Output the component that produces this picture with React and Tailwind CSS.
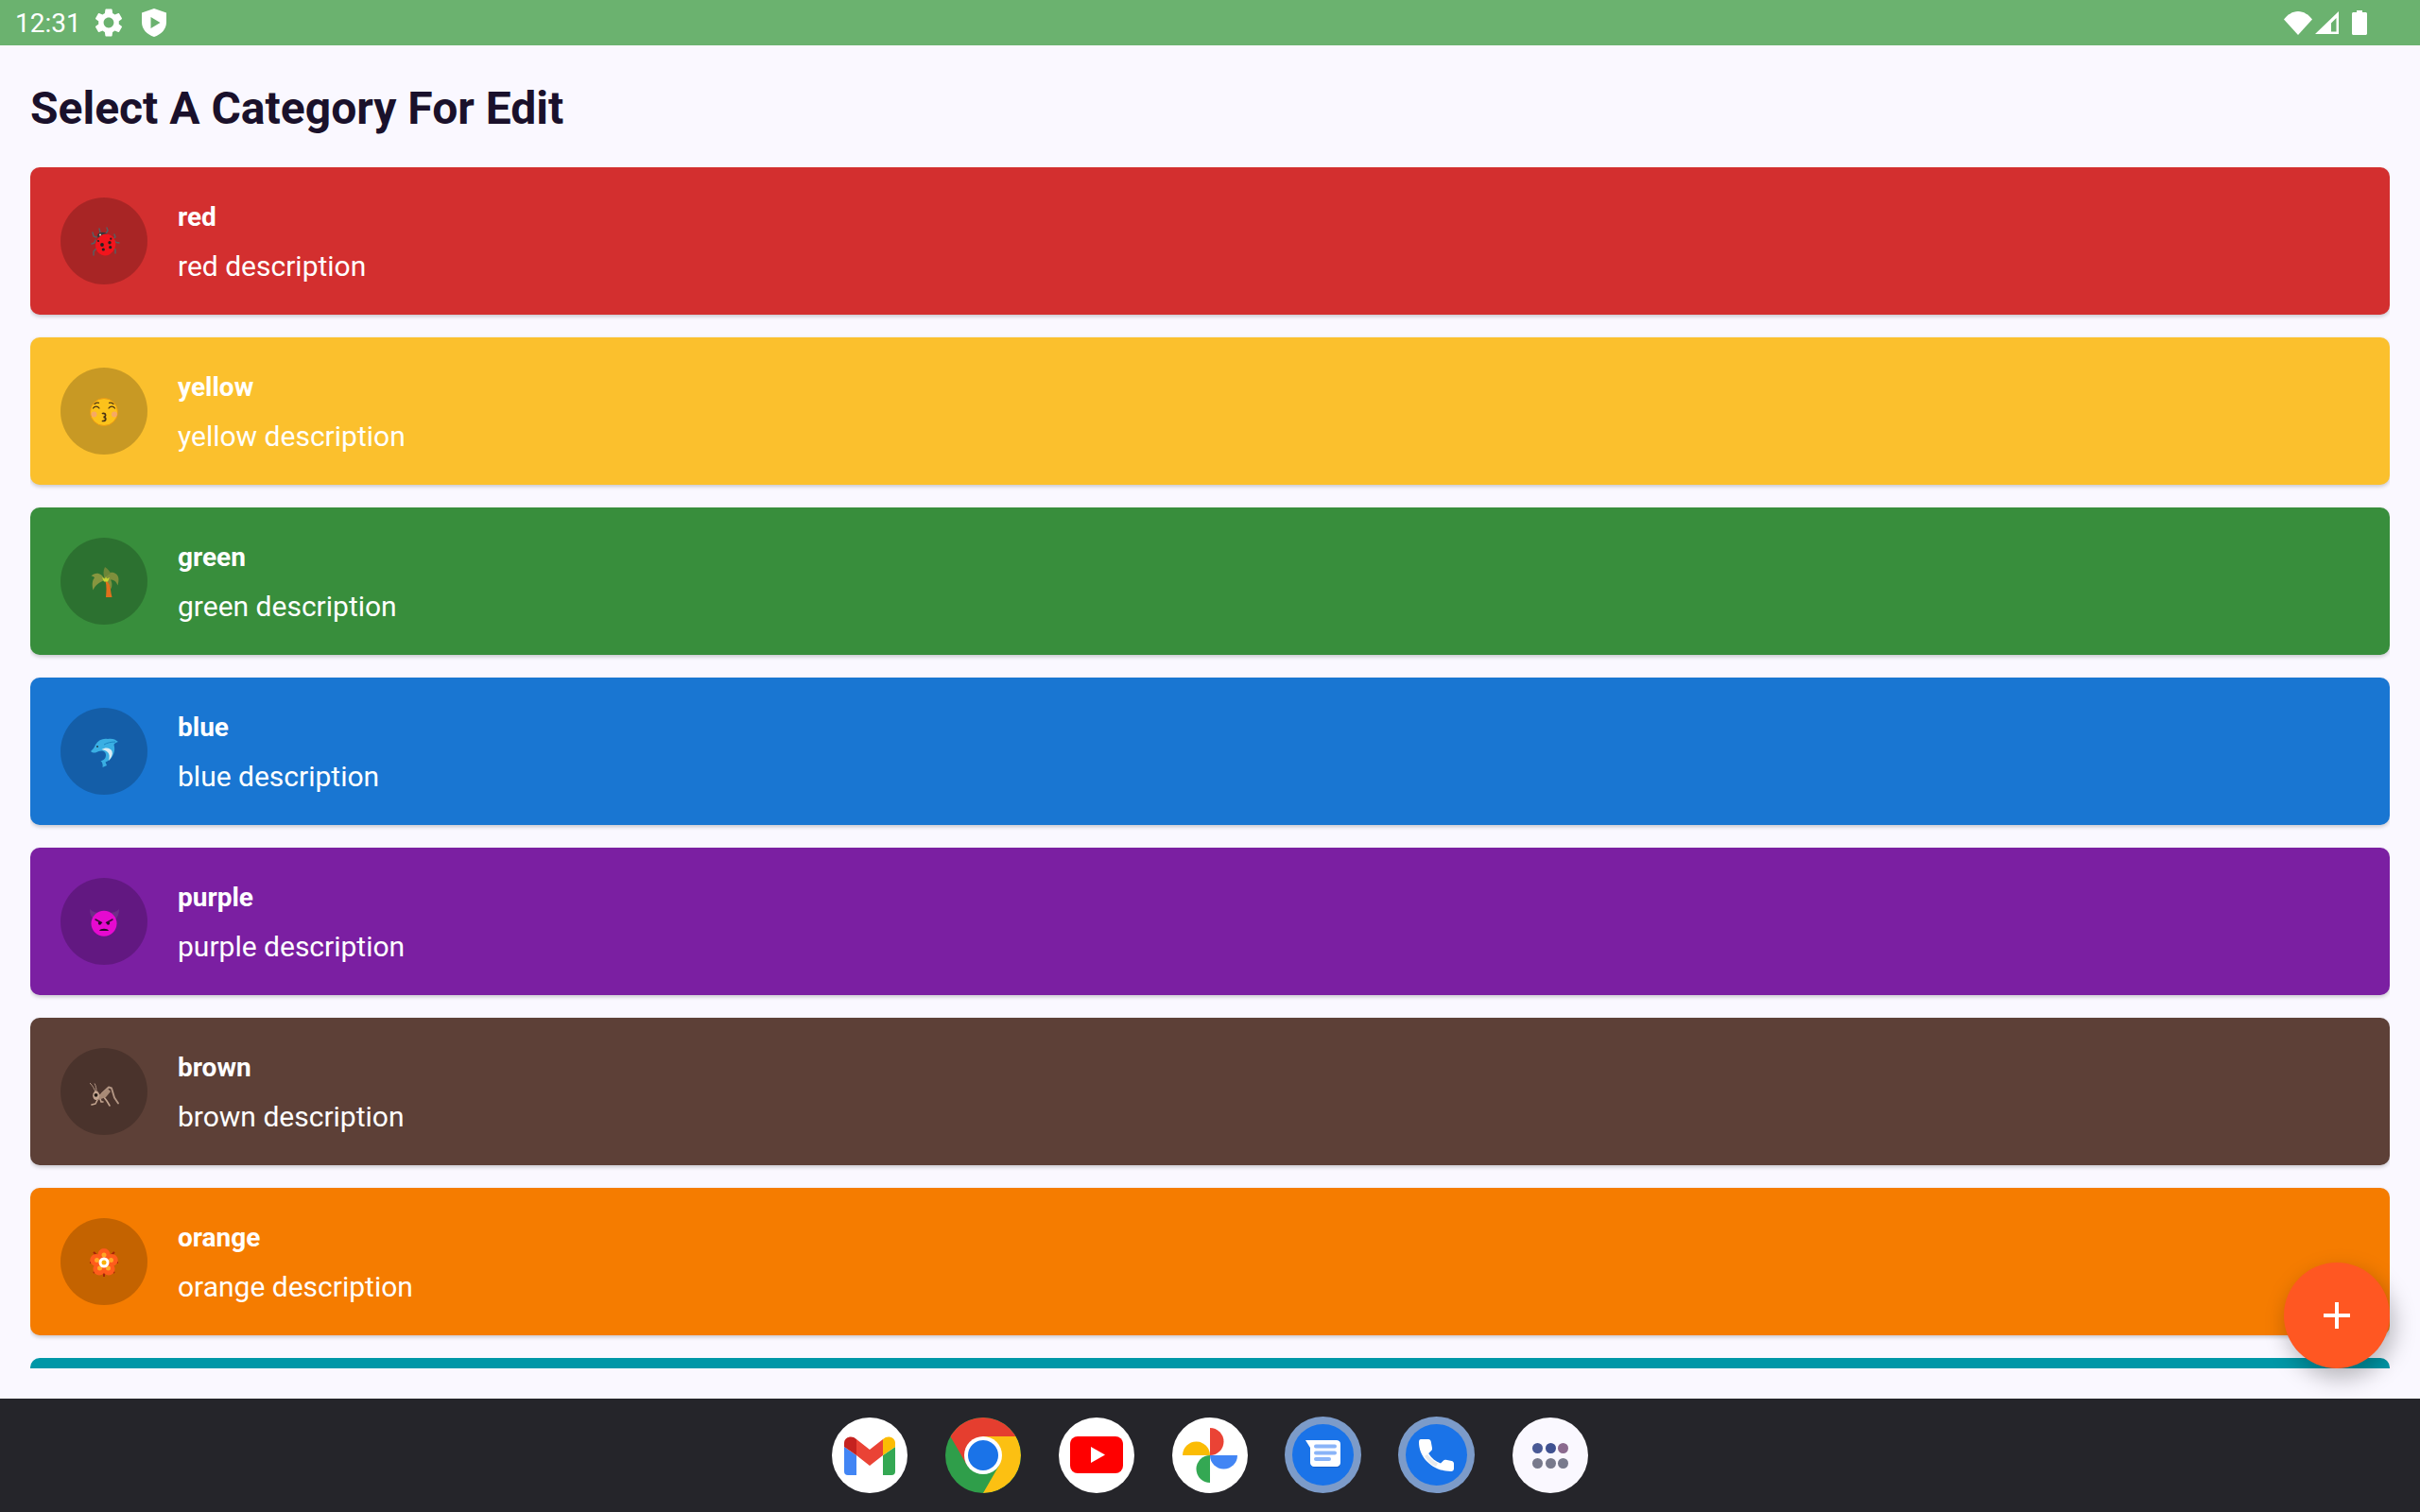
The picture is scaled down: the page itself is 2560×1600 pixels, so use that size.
const Ladybug = () => (
  <svg width="32" height="32" viewBox="0 0 32 32" fill="none">
    <path d="M10 2l1 4M18 1l1 3-2 3M3 6l1 4 3 1M26 8l1 3-3 2M2 18l3-1 1-3M31 17l-3-.5-2-2M4 30l0-4 3-3M27 28l0-4-3-2" stroke="#566064" strokeWidth="1.400" strokeLinecap="round" strokeLinejoin="round" />
    <ellipse cx="13.500" cy="9.500" rx="5.500" ry="3.800" fill="#33383b" />
    <ellipse cx="16.700" cy="19" rx="10.500" ry="11.500" transform="rotate(20 16.700 19)" fill="#f2141c" />
    <g fill="#222">
      <circle cx="13" cy="19" r="1.900" /><circle cx="21" cy="16.700" r="1.700" /><circle cx="22.300" cy="12.700" r="1.100" />
      <circle cx="14.300" cy="24" r="1.600" /><circle cx="21.700" cy="21.700" r="1.600" /><circle cx="9" cy="15" r="1.100" />
    </g>
    <circle cx="11" cy="8.500" r="1" fill="#f2e3c4" />
  </svg>
)

const Kissing = () => (
  <svg width="32" height="32" viewBox="0 0 32 32" fill="none">
    <circle cx="15" cy="16" r="14.500" fill="#fcc21b" stroke="#ec9a12" strokeWidth="1" />
    <circle cx="4.500" cy="18.500" r="3" fill="#f5a07c" opacity=".75" />
    <circle cx="26" cy="18.500" r="3" fill="#f5a07c" opacity=".75" />
    <path d="M3.500 12c1.500-2.500 5-2.500 6.500 0M20 12c1.500-2.500 5-2.500 6.500 0M5 7.500c1.500-1.200 3-1.500 4.500-1.200M20.500 6.300c1.500-.3 3 0 4.500 1.200" stroke="#4b3415" strokeWidth="1.200" strokeLinecap="round" />
    <path d="M13.500 17.500c4-.5 4 3.500 1 3.800 3.200.4 3.200 4.500-1 4.200" stroke="#4b3415" strokeWidth="1.700" strokeLinecap="round" />
  </svg>
)

const Palm = () => (
  <svg width="32" height="32" viewBox="0 0 32 32" fill="none">
    <path d="M16.500 15l5 0C21.500 21 22 26 23.500 32H17c.5-6 1-12-.5-17z" fill="#e0701c" />
    <path d="M16 14C13 6 6 5 1.500 9.500 3.500 9.500 4.500 10.500 5 11.500 2.500 14 2 19 3.500 24.500 6 19 10 16 16 14z" fill="#87963f" />
    <path d="M15 13c1-7 9-9 13-5.500 3 2.500 3 7 1.500 12C28 15 25 13.500 22 13.500 23.500 16 24 19 22.500 23.500 21 18 19 15 15 13z" fill="#7e8f3c" />
    <path d="M16 13c-2-5-2-9 0-13 3 2 5 4 6 7-3 1-5 3-6 6z" fill="#6d8638" />
    <path d="M13 11l3 1.500 1-2.500 1 2.500 3-1.500-2 4.500h-4z" fill="#c8d633" />
  </svg>
)

const Dolphin = () => (
  <svg width="32" height="32" viewBox="0 0 32 32" fill="none">
    <path d="M1 15c2-2 4-4 5-7 3-5 8-7 13-6 4-1 8 0 11 3-2 .5-4 1.500-4.500 3 1.500 5 .5 10-3.500 15-2 2-4 3-5.500 3.500L18 30l-4.500 2c.5-3 0-5-2-7 3 0 5.500-2.500 5.500-6 0-4-4-5.500-7.500-4C7 16.500 3.500 17.500 1 15z" fill="#3aafe3" />
    <path d="M12.500 13c4.500-3 9.500-1.500 11 2 1 3-.5 7-3.500 10 1-4 1-7-1-9-2-1.800-4.500-2.500-6.500-3z" fill="#dcecf3" />
    <path d="M15 8c3-2 8-3 12-3" stroke="#1b86c2" strokeWidth="1" />
    <circle cx="8" cy="10" r="1" fill="#1e3a4d" />
  </svg>
)

const Devil = () => (
  <svg width="32" height="32" viewBox="0 0 32 32" fill="none">
    <path d="M0 2c0 5 1.500 9 5 12l6-8C7 6 3 5 0 2zM31 2c0 5-1.500 9-5 12l-6-8c4 0 8-1 11-4z" fill="#6c2f87" />
    <circle cx="15" cy="17.300" r="13.500" fill="#e60ad0" />
    <path d="M6 13l6.500 3.500M24 13l-6.500 3.500" stroke="#3b0a3a" strokeWidth="1.500" strokeLinecap="round" />
    <circle cx="10.500" cy="17" r="1.700" fill="#2a0a2a" /><circle cx="19.500" cy="17" r="1.700" fill="#2a0a2a" />
    <path d="M10 25c1-3 9-3 10 0z" fill="#2a0a2a" />
  </svg>
)

const Cricket = () => (
  <svg width="32" height="32" viewBox="0 0 32 32" fill="none">
    <path d="M6 16C5 12 3 9 0 6M7 16C7 12 6.500 9 5 6.500" stroke="#b39684" strokeWidth="1" />
    <path d="M8 24l-2 4-4 1M11 23l1 3 2 0M15 21l3 4 3 5" stroke="#c4a590" strokeWidth="1.600" strokeLinecap="round" strokeLinejoin="round" />
    <path d="M13 17l7-6.500 3 1 3 10 4 6" stroke="#b39684" strokeWidth="1.900" strokeLinecap="round" strokeLinejoin="round" />
    <path d="M9 19l10-7 3 3-5 6-8 3z" fill="#a88a76" />
    <ellipse cx="6.700" cy="19.300" rx="3.500" ry="4.800" fill="#c4a590" />
    <circle cx="6.500" cy="18.800" r="1.900" fill="#231a15" />
  </svg>
)

const Flower = () => (
  <svg width="32" height="32" viewBox="0 0 32 32" fill="none">
    <g transform="translate(-1 0)">
      <path d="M16 1v30M1 16h30M5 5l22 22M27 5L5 27" stroke="#a32409" strokeWidth="2" />
      <g fill="#ff5c1c">
        <circle cx="16" cy="7.500" r="6.500" /><circle cx="24.200" cy="13.400" r="6.500" /><circle cx="21" cy="23" r="6.500" />
        <circle cx="11" cy="23" r="6.500" /><circle cx="7.800" cy="13.400" r="6.500" />
      </g>
      <g fill="#ffa726">
        <circle cx="16" cy="8" r="2.500" /><circle cx="23.500" cy="13.500" r="2.500" /><circle cx="20.500" cy="22" r="2.500" />
        <circle cx="11.500" cy="22" r="2.500" /><circle cx="8.500" cy="13.500" r="2.500" />
      </g>
      <circle cx="16" cy="16" r="5.500" fill="#fff" />
      <circle cx="16" cy="16" r="2.500" fill="#f9b208" />
    </g>
  </svg>
)

const categories = [
  { name: 'red', bg: 'bg-[#d32f2f]', Icon: Ladybug },
  { name: 'yellow', bg: 'bg-[#fbc02d]', Icon: Kissing },
  { name: 'green', bg: 'bg-[#388e3c]', Icon: Palm },
  { name: 'blue', bg: 'bg-[#1976d2]', Icon: Dolphin },
  { name: 'purple', bg: 'bg-[#7b1fa2]', Icon: Devil },
  { name: 'brown', bg: 'bg-[#5d4037]', Icon: Cricket },
  { name: 'orange', bg: 'bg-[#f57c00]', Icon: Flower },
]

function StatusBar() {
  return (
    <div className="h-12 shrink-0 bg-[#6bb26f] flex items-center justify-between pl-4 pr-14 text-white">
      <div className="flex items-center">
        <span className="text-[28px] leading-none w-[81px] pt-0.5">12:31</span>
        <svg width="36" height="36" viewBox="0 0 24 24" fill="#fff">
          <path d="M19.14 12.94c.04-.3.06-.61.06-.94 0-.32-.02-.64-.07-.94l2.03-1.58c.18-.14.23-.41.12-.61l-1.92-3.32c-.12-.22-.37-.29-.59-.22l-2.39.96c-.5-.38-1.03-.7-1.62-.94l-.36-2.54c-.04-.24-.24-.41-.48-.41h-3.84c-.24 0-.43.17-.47.41l-.36 2.54c-.59.24-1.13.57-1.62.94l-2.39-.96c-.22-.08-.47 0-.59.22L2.74 8.87c-.12.21-.08.47.12.61l2.03 1.58c-.05.3-.09.63-.09.94s.02.64.07.94l-2.03 1.58c-.18.14-.23.41-.12.61l1.92 3.32c.12.22.37.29.59.22l2.39-.96c.5.38 1.03.7 1.62.94l.36 2.54c.05.24.24.41.48.41h3.84c.24 0 .44-.17.47-.41l.36-2.54c.59-.24 1.13-.56 1.62-.94l2.39.96c.22.08.47 0 .59-.22l1.92-3.32c.12-.22.07-.47-.12-.61l-2.01-1.58zM12 15.6c-1.98 0-3.6-1.62-3.6-3.6s1.62-3.6 3.6-3.6 3.6 1.62 3.6 3.6-1.62 3.6-3.6 3.6z" />
        </svg>
        <svg className="ml-[17px]" width="26" height="30" viewBox="0 0 26 30">
          <path fillRule="evenodd" fill="#fff" d="M13 0l13 4.500v10C26 22 20.500 27.500 13 30 5.500 27.500 0 22 0 14.500v-10zM9.500 9v12l10-6z" />
        </svg>
      </div>
      <div className="flex items-center">
        <svg width="30" height="25" viewBox="0 0 30 25">
          <path fill="#fff" d="M15 25L0 8.500C4 3.500 9 0 15 0s11 3.500 15 8.500z" />
        </svg>
        <svg className="ml-[3px]" width="25" height="24" viewBox="0 0 25 24">
          <path fill="#fff" fillRule="evenodd" d="M25 0v24H0zM22.500 7L17 12.500V21.500h5.500z" />
        </svg>
        <svg className="ml-[14px]" width="16" height="26" viewBox="0 0 16 26">
          <path fill="#fff" d="M5 0h6v2h3.500c.8 0 1.500.7 1.500 1.500v21c0 .8-.7 1.500-1.500 1.500h-13C.7 26 0 25.300 0 24.500v-21C0 2.700.7 2 1.500 2H5z" />
        </svg>
      </div>
    </div>
  )
}

function CategoryCard({ category }) {
  const { name, bg, Icon } = category
  return (
    <div className={`${bg} h-[156px] shrink-0 rounded-[10px] shadow-[0_2px_4px_rgba(0,0,0,0.2)] flex items-center pl-8 gap-8 text-white`}>
      <div className="w-[92px] h-[92px] rounded-full bg-black/20 flex items-center justify-center pl-0.5 pt-0.5">
        <Icon />
      </div>
      <div className="flex flex-col gap-6 pt-0.5">
        <span className="text-[28px] leading-7 font-bold">{name}</span>
        <span className="text-[30px] leading-7">{name} description</span>
      </div>
    </div>
  )
}

const dockBase = 'w-20 h-20 rounded-full flex items-center justify-center overflow-hidden'

function Dock() {
  return (
    <div className="h-[120px] shrink-0 bg-[#25252a] flex items-center justify-center gap-10">
      <div className={`${dockBase} bg-white`}>
        <svg width="54" height="41" viewBox="0 0 54 41">
          <path fill="#4285f4" d="M0 11l13 9v21H4a4 4 0 0 1-4-4z" />
          <path fill="#c5221f" d="M0 7c0-6 8-9 13-4v17L0 11z" />
          <path fill="#ea4335" d="M13 3l14 11L41 3v17L27 31 13 20z" />
          <path fill="#34a853" d="M41 20l13-9v26a4 4 0 0 1-4 4h-9z" />
          <path fill="#fbbc04" d="M41 3c5-5 13-2 13 4v4l-13 9z" />
        </svg>
      </div>
      <div className={`${dockBase} bg-[#2f9e4a]`}>
        <svg width="80" height="80" viewBox="0 0 80 80">
          <path fill="#e53e2f" d="M5.360 20A40 40 0 0 1 74.640 20H40L22.700 50z" />
          <path fill="#fcc012" d="M74.640 20A40 40 0 0 1 40 80L57.300 50 40 20z" />
          <circle cx="40" cy="40" r="20" fill="#fff" />
          <circle cx="40" cy="40" r="16" fill="#1a73e8" />
        </svg>
      </div>
      <div className={`${dockBase} bg-white`}>
        <svg width="56" height="40" viewBox="0 0 56 40">
          <rect width="56" height="39" rx="8" fill="#ff0000" />
          <path fill="#fff" d="M22 11l15 8.500L22 28z" />
        </svg>
      </div>
      <div className={`${dockBase} bg-white`}>
        <svg width="58" height="58" viewBox="0 0 58 58">
          <path fill="#fbbc04" d="M0 29a14.500 14.500 0 0 1 29 0z" />
          <path fill="#ea4335" d="M29 0a14.500 14.500 0 0 1 0 29z" />
          <path fill="#4285f4" d="M29 29h29a14.500 14.500 0 0 1-29 0z" />
          <path fill="#34a853" d="M29 29v29a14.500 14.500 0 0 1 0-29z" />
        </svg>
      </div>
      <div className="w-[81px] h-[81px] -ml-px -mt-px rounded-full bg-[#7c9bc9] flex items-center justify-center">
        <div className="w-[65px] h-[65px] rounded-full bg-[#1a73e8] flex items-center justify-center">
          <svg width="38" height="32" viewBox="0 0 38 32">
            <path fill="#174ea6" opacity=".5" d="M6 3h30v26H10c-2 0-3-1-3-3z" />
            <path fill="#fff" d="M0 0h33c2 0 4 1.500 4 4v20c0 2-2 4-4 4H9c-2 0-4-2-4-4V8z" />
            <g fill="#8ab4f8">
              <rect x="9" y="4.500" width="24" height="4" rx="2" /><rect x="9" y="11.500" width="24" height="4" rx="2" /><rect x="9" y="18" width="18" height="4" rx="2" />
            </g>
          </svg>
        </div>
      </div>
      <div className="w-[81px] h-[81px] -ml-px -mt-px rounded-full bg-[#7c9bc9] flex items-center justify-center">
        <div className="w-[65px] h-[65px] rounded-full bg-[#1a73e8] flex items-center justify-center">
          <svg width="37" height="34" viewBox="0 0 37 34">
            <path fill="#fff" d="M2 0h8c1.500 0 2.500 1 2.700 2.300l1.300 7c.2 1-.1 2-.8 2.700l-3 3c3 5 7.500 8.500 12.800 10.500l3-3c.7-.7 1.700-.9 2.600-.7l6 1.200c1.300.3 2.400 1.300 2.400 2.700V31c0 1.700-1.300 3-3 3C15 34 0 20 0 3c0-1.700.8-3 2-3z" />
            <path fill="#e8eaed" d="M6 18l3-2c3 4 6 7 11 9.500L18 29c-5-2-9-6-12-11z" />
          </svg>
        </div>
      </div>
      <div className={`${dockBase} bg-[#faf8ff]`}>
        <div className="grid grid-cols-3 gap-x-[2.500px] gap-y-[5px]">
          <span className="w-[11px] h-[11px] rounded-full bg-[#4a5a96]" />
          <span className="w-[11px] h-[11px] rounded-full bg-[#3f5191]" />
          <span className="w-[11px] h-[11px] rounded-full bg-[#8b6a8f]" />
          <span className="w-[11px] h-[11px] rounded-full bg-[#787a8c]" />
          <span className="w-[11px] h-[11px] rounded-full bg-[#787a8c]" />
          <span className="w-[11px] h-[11px] rounded-full bg-[#787a8c]" />
        </div>
      </div>
    </div>
  )
}

export default function App() {
  return (
    <div className="h-screen flex flex-col bg-[#faf8ff] font-['Roboto',sans-serif] overflow-hidden">
      <StatusBar />
      <div className="relative flex-1 min-h-0 flex flex-col px-8 pb-8">
        <h1 className="pt-[39px] pb-[34px] text-[48px] leading-14 font-bold text-[#1a112b]">Select A Category For Edit</h1>
        <div className="flex-1 min-h-0 overflow-hidden flex flex-col gap-6">
          {categories.map(c => <CategoryCard key={c.name} category={c} />)}
          {/* next card, only its top edge shows above the fold */}
          <div className="h-[156px] shrink-0 rounded-[10px] bg-[#0097a7]" />
        </div>
        <button className="absolute right-8 bottom-8 w-28 h-28 rounded-full bg-[#ff5722] flex items-center justify-center shadow-[4px_10px_24px_rgba(0,0,0,0.28)]">
          <svg width="28" height="28" viewBox="0 0 28 28">
            <path fill="#fff" d="M12 0h4v12h12v4H16v12h-4V16H0v-4h12z" />
          </svg>
        </button>
      </div>
      <Dock />
    </div>
  )
}
